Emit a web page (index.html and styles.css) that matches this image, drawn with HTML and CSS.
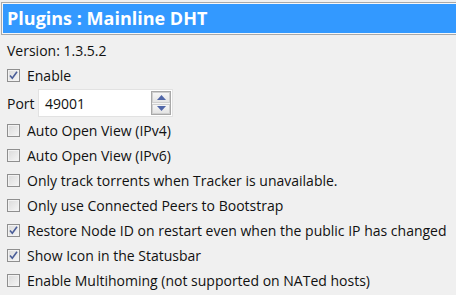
FILE: index.html
```html
<!DOCTYPE html>
<html>
<head>
<meta charset="utf-8">
<link rel="stylesheet" href="styles.css">
</head>
<body>
<div class="header"><div class="header-inner">Plugins : Mainline DHT</div></div>
<div class="content">
  <div class="row">Version: 1.3.5.2</div>
  <div class="row"><span class="cb checked"><svg viewBox="0 0 11 11" width="11" height="11"><path d="M2 5.5 L4.3 8.3 L9 1.8" fill="none" stroke="#4a5d98" stroke-width="1.6"/></svg></span>Enable</div>
  <div class="row port-row">
    <span class="port-label">Port</span>
    <div class="spin">
      <span class="spin-value">49001</span>
      <div class="spin-btns">
        <div class="spin-btn"><svg viewBox="0 0 9 5" width="9" height="5"><path d="M0 5 L4.5 0 L9 5 Z" fill="#5066a8"/></svg></div>
        <div class="spin-btn"><svg viewBox="0 0 9 5" width="9" height="5"><path d="M0 0 L4.5 5 L9 0 Z" fill="#5066a8"/></svg></div>
      </div>
    </div>
  </div>
  <div class="row"><span class="cb"></span>Auto Open View (IPv4)</div>
  <div class="row"><span class="cb"></span>Auto Open View (IPv6)</div>
  <div class="row"><span class="cb"></span>Only track torrents when Tracker is unavailable.</div>
  <div class="row"><span class="cb"></span>Only use Connected Peers to Bootstrap</div>
  <div class="row"><span class="cb checked"><svg viewBox="0 0 11 11" width="11" height="11"><path d="M2 5.5 L4.3 8.3 L9 1.8" fill="none" stroke="#4a5d98" stroke-width="1.6"/></svg></span>Restore Node ID on restart even when the public IP has changed</div>
  <div class="row"><span class="cb checked"><svg viewBox="0 0 11 11" width="11" height="11"><path d="M2 5.5 L4.3 8.3 L9 1.8" fill="none" stroke="#4a5d98" stroke-width="1.6"/></svg></span>Show Icon in the Statusbar</div>
  <div class="row"><span class="cb"></span>Enable Multihoming (not supported on NATed hosts)</div>
</div>
</body>
</html>
```
FILE: styles.css
```css
html, body {
  margin: 0;
  padding: 0;
  background: #f0f0f0;
}
body {
  font-family: "Open Sans", "Noto Sans", sans-serif;
  font-size: 14px;
  color: #111111;
  overflow: hidden;
}
.header {
  margin-top: 2px;
  margin-left: 1px;
  border-top: 1px solid #a9a9a9;
  border-bottom: 1px solid #a9a9a9;
  border-left: 1px solid #a9a9a9;
  padding: 1px 0 1px 1px;
  background: #f7f7f7;
}
.header-inner {
  height: 29px;
  background: #3399ff;
  color: #ffffff;
  font-weight: bold;
  font-size: 18px;
  line-height: 29px;
  padding-left: 4px;
}
.content {
  padding: 3px 0 0 7px;
  display: flex;
  flex-direction: column;
}
.row {
  height: 25px;
  display: flex;
  align-items: center;
  white-space: nowrap;
}
.port-row {
  height: 30px;
}
.port-label {
  width: 31px;
}
.spin {
  width: 133px;
  height: 26px;
  background: #ffffff;
  border: 1px solid #e2e2e2;
  display: flex;
  align-items: center;
  justify-content: space-between;
}
.spin-value {
  padding-left: 6px;
}
.spin-btns {
  width: 18px;
  height: 22px;
  border: 1px solid #a8a8a8;
  margin-right: 1px;
  display: flex;
  flex-direction: column;
  gap: 1px;
  padding: 0;
  background: #f4f4f4;
}
.spin-btn {
  flex: 1;
  border: 1px solid #cfcfcf;
  background: linear-gradient(#f6f6f6, #e4e4e4);
  display: flex;
  align-items: center;
  justify-content: center;
}
.cb {
  width: 11px;
  height: 11px;
  border: 1px solid #8f8f8f;
  background: linear-gradient(135deg, #dadada, #f6f6f6);
  box-shadow: inset 0 0 0 1px #f2f2f2;
  margin-right: 7px;
  display: flex;
  align-items: center;
  justify-content: center;
  flex-shrink: 0;
}
.cb svg {
  display: block;
}
```
